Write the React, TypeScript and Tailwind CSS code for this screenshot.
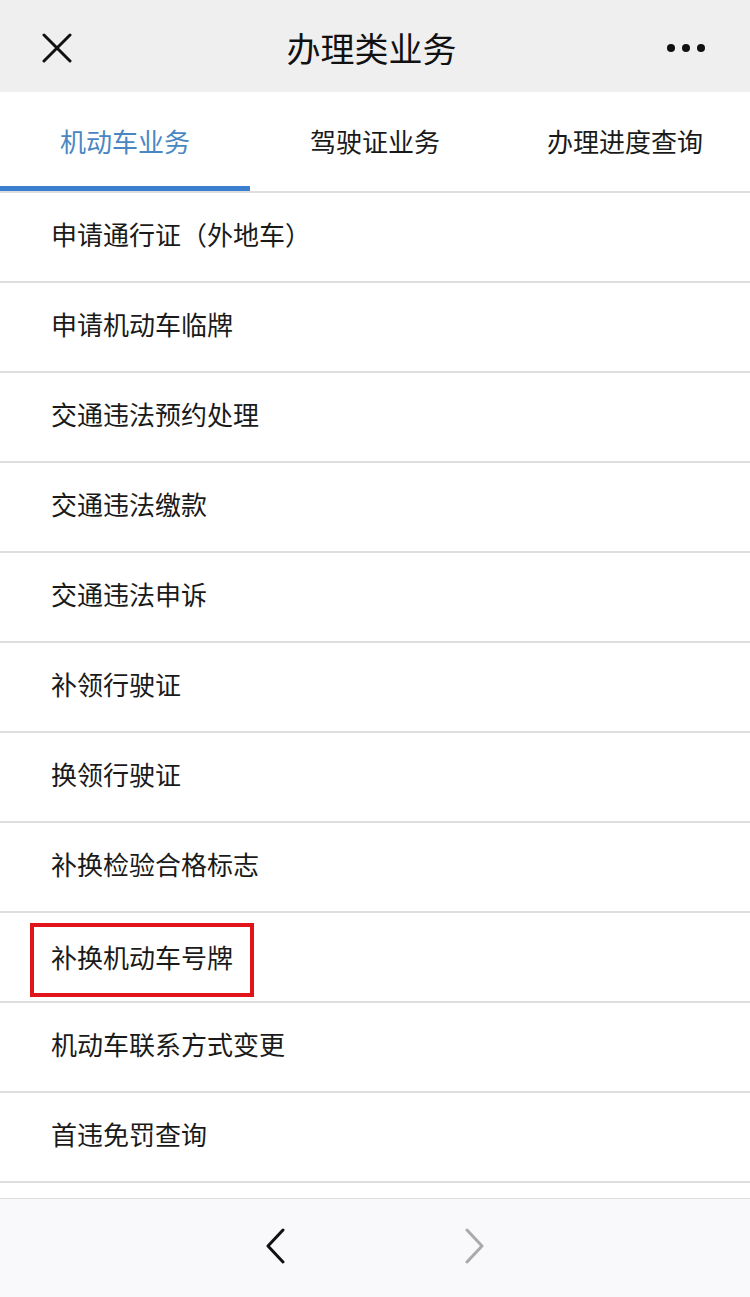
import { useState } from "react"

const items = [
  "申请通行证（外地车）",
  "申请机动车临牌",
  "交通违法预约处理",
  "交通违法缴款",
  "交通违法申诉",
  "补领行驶证",
  "换领行驶证",
  "补换检验合格标志",
  "补换机动车号牌",
  "机动车联系方式变更",
  "首违免罚查询",
]

const tabs = ["机动车业务", "驾驶证业务", "办理进度查询"]

export default function App() {
  const [active, setActive] = useState(0)

  return (
    <div
      className="w-[750px] h-[1297px] flex flex-col bg-white overflow-hidden"
      style={{ fontFamily: '"Noto Sans CJK SC", "Noto Sans", sans-serif' }}
    >
      {/* Top bar */}
      <div className="h-[92px] bg-[#efefef] flex items-center px-[42px] pt-[3px] shrink-0">
        <svg width="30" height="30" viewBox="0 0 30 30" className="shrink-0">
          <path d="M2 2 L28 28 M28 2 L2 28" stroke="#111" strokeWidth="3" strokeLinecap="round" />
        </svg>
        <div className="flex-1 text-center text-[34px] text-[#111] pl-[4px]">
          办理类业务
        </div>
        <div className="flex items-center gap-[7px] pr-[3px]">
          <span className="w-[8px] h-[8px] rounded-full bg-[#111]" />
          <span className="w-[8px] h-[8px] rounded-full bg-[#111]" />
          <span className="w-[8px] h-[8px] rounded-full bg-[#111]" />
        </div>
      </div>

      {/* Tabs */}
      <div className="h-[101px] flex border-b-2 border-[#dedede] shrink-0">
        {tabs.map((t, i) => (
          <button
            key={t}
            onClick={() => setActive(i)}
            className={`flex-1 relative flex items-center justify-center pb-[2px] text-[26px] ${
              active === i ? "text-[#4a87c2]" : "text-[#1a1a1a]"
            }`}
          >
            {t}
            {active === i && (
              <span className="absolute left-0 right-0 bottom-0 h-[5px] bg-[#3a7fcf]" />
            )}
          </button>
        ))}
      </div>

      {/* List */}
      <div className="flex flex-col shrink-0">
        {items.map((item) => (
          <div
            key={item}
            className="h-[90px] flex items-center border-b-2 border-[#dedede] pl-[51px] pb-[7px] text-[26px] text-[#1a1a1a]"
          >
            {item === "补换机动车号牌" ? (
              <div className="-ml-[21px] mt-[12px] px-[17px] h-[74px] flex items-center pb-[7px] border-[4px] border-[#e0141a]">
                {item}
              </div>
            ) : (
              item
            )}
          </div>
        ))}
      </div>

      <div className="h-[16px] bg-white border-b border-[#dcdcdc] shrink-0" />

      {/* Bottom nav */}
      <div className="flex-1 bg-[#f9f8fa] flex items-center justify-center gap-[178px] pb-[4px]">
        <svg width="22" height="36" viewBox="0 0 22 36">
          <path d="M19 2 L4 18 L19 34" stroke="#111" strokeWidth="3" fill="none" strokeLinecap="round" strokeLinejoin="round" />
        </svg>
        <svg width="22" height="36" viewBox="0 0 22 36">
          <path d="M3 2 L18 18 L3 34" stroke="#aaa" strokeWidth="3" fill="none" strokeLinecap="round" strokeLinejoin="round" />
        </svg>
      </div>
    </div>
  )
}
